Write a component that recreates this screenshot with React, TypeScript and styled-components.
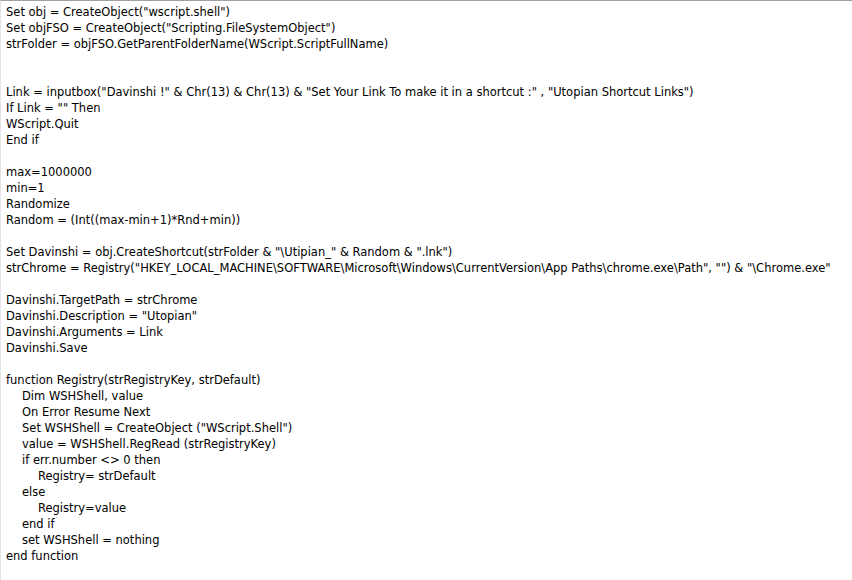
import styled, { createGlobalStyle } from 'styled-components';

const GlobalStyle = createGlobalStyle`
  html, body {
    margin: 0;
    padding: 0;
    background: #fff;
  }
`;

const Editor = styled.div`
  width: 852px;
  height: 580px;
  box-sizing: border-box;
  border-top: 1px solid #a0a0a0;
  border-left: 1px solid #e3e3e3;
  background: #fff;
  padding: 3px 0 0 5px;
  overflow: hidden;
  font-family: 'DejaVu Sans', Verdana, sans-serif;
  font-size: 11.5px;
  color: #000;
`;

const Line = styled.div<{ $indent?: number }>`
  height: 16px;
  line-height: 16px;
  white-space: pre;
  padding-left: ${(p) => (p.$indent || 0) * 16}px;
`;

const code: [number, string][] = [
  [0, 'Set obj = CreateObject("wscript.shell")'],
  [0, 'Set objFSO = CreateObject("Scripting.FileSystemObject")'],
  [0, 'strFolder = objFSO.GetParentFolderName(WScript.ScriptFullName)'],
  [0, ''],
  [0, ''],
  [0, 'Link = inputbox("Davinshi !" & Chr(13) & Chr(13) & "Set Your Link To make it in a shortcut :" , "Utopian Shortcut Links")'],
  [0, 'If Link = "" Then'],
  [0, 'WScript.Quit'],
  [0, 'End if'],
  [0, ''],
  [0, 'max=1000000'],
  [0, 'min=1'],
  [0, 'Randomize'],
  [0, 'Random = (Int((max-min+1)*Rnd+min))'],
  [0, ''],
  [0, 'Set Davinshi = obj.CreateShortcut(strFolder & "\\Utipian_" & Random & ".lnk")'],
  [0, 'strChrome = Registry("HKEY_LOCAL_MACHINE\\SOFTWARE\\Microsoft\\Windows\\CurrentVersion\\App Paths\\chrome.exe\\Path", "") & "\\Chrome.exe"'],
  [0, ''],
  [0, 'Davinshi.TargetPath = strChrome'],
  [0, 'Davinshi.Description = "Utopian"'],
  [0, 'Davinshi.Arguments = Link'],
  [0, 'Davinshi.Save'],
  [0, ''],
  [0, 'function Registry(strRegistryKey, strDefault)'],
  [1, 'Dim WSHShell, value'],
  [1, 'On Error Resume Next'],
  [1, 'Set WSHShell = CreateObject ("WScript.Shell")'],
  [1, 'value = WSHShell.RegRead (strRegistryKey)'],
  [1, 'if err.number <> 0 then'],
  [2, 'Registry= strDefault'],
  [1, 'else'],
  [2, 'Registry=value'],
  [1, 'end if'],
  [1, 'set WSHShell = nothing'],
  [0, 'end function'],
];

export default function App() {
  return (
    <>
      <GlobalStyle />
      <Editor>
        {code.map(([indent, text], i) => (
          <Line key={i} $indent={indent}>
            {text}
          </Line>
        ))}
      </Editor>
    </>
  );
}
